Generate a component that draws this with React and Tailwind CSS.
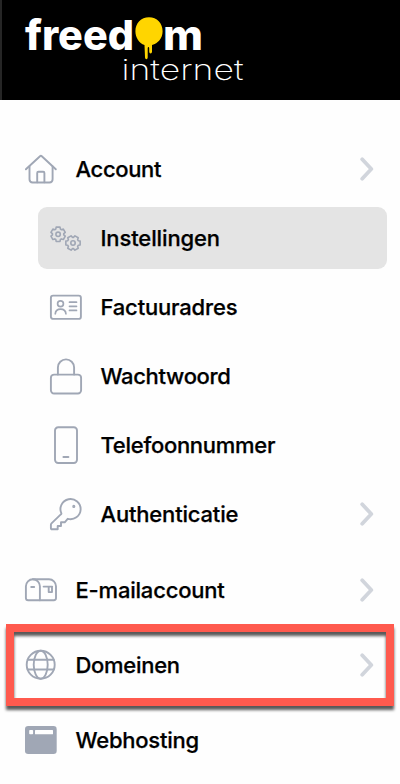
import clsx from 'clsx';

const Icon = ({ children }) => (
  <svg
    viewBox="0 0 32 32"
    className="h-8 w-8 shrink-0 overflow-visible text-[#a0a7b5]"
    fill="none"
    stroke="currentColor"
    strokeWidth="1.9"
    strokeLinecap="round"
    strokeLinejoin="round"
  >
    {children}
  </svg>
);

const HomeIcon = () => (
  <Icon>
    <path d="M.9 16.3 15 3.2q.9-.8 1.8 0L30.8 16.3" />
    <path d="M4.5 13.4v12.9q0 3.2 3.2 3.2h16.7q3.2 0 3.2-3.2V13.4" />
    <path d="M12.2 29.300V20q0-1.200 1.200-1.200h4.800q1.200 0 1.200 1.200v9.300" />
  </Icon>
);

// six-toothed cog outline around (cx, cy)
const cogPath = (cx, cy, turn) => {
  const points = [];
  for (let i = 0; i < 6; i++) {
    const mid = turn + i * 60;
    [[-24, 5.7], [-15, 7.4], [15, 7.4], [24, 5.7]].forEach(([offset, r]) => {
      const a = ((mid + offset) * Math.PI) / 180;
      points.push(`${(cx + r * Math.cos(a)).toFixed(2)} ${(cy + r * Math.sin(a)).toFixed(2)}`);
    });
  }
  return `M${points.join('L')}Z`;
};

const CogsIcon = () => (
  <Icon>
    <g strokeWidth="1.6">
      <path d={cogPath(8.1, 12.3, 30)} />
      <circle cx="8.1" cy="12.3" r="2.2" />
      <path d={cogPath(23, 21, 0)} />
      <circle cx="23" cy="21" r="2.2" />
    </g>
  </Icon>
);

const CardIcon = () => (
  <Icon>
    <rect x=".9" y="4.6" width="30" height="23.3" rx="2.2" />
    <g strokeWidth="1.7">
      <circle cx="10.5" cy="12.8" r="2.9" />
      <path d="M5.3 22.8c.4-6.3 10.2-6.3 10.600 0M19.500 11.200h7M19.500 15.300h7M19.500 19.400h7" />
    </g>
  </Icon>
);

const LockIcon = () => (
  <Icon>
    <rect x=".9" y="14.6" width="30.2" height="18.900" rx="3.200" />
    <path d="M7.900 14.500v-7a8.100 8.100 0 0 1 16.200 0v7" />
  </Icon>
);

const PhoneIcon = () => (
  <Icon>
    <rect x="5" y="-1.700" width="22" height="35.700" rx="3.200" />
    <path d="M13.400 28h5" />
  </Icon>
);

const KeyIcon = () => (
  <Icon>
    <path d="M11.400 15.400A10.100 10.100 0 1 1 17.700 20.800l-3 3.500H11V28H7.700v3.300H2Q.9 31.300.9 30.200v-3.400q0-.9.6-1.500l9.300-8.900q.6-.5.6-1Z" />
    <circle cx="23.800" cy="8.400" r=".6" fill="currentColor" />
  </Icon>
);

const MailboxIcon = () => (
  <Icon>
    <path d="M.9 12.300a7 7 0 0 1 14 0v14H3.100q-2.200 0-2.200-2.200Z" />
    <path d="M7.900 5.300H24a7 7 0 0 1 7 7v11.800q0 2.200-2.200 2.200h-14" />
    <path d="M6.200 13h3M18.600 12.600h8.600M27 12.600v5.500h-3.300v-5.500" />
  </Icon>
);

const GlobeIcon = () => (
  <Icon>
    <circle cx="15.700" cy="15.700" r="14" />
    <ellipse cx="15.700" cy="15.700" rx="7" ry="14" />
    <path d="M2.700 10.700h26M2.700 20.500h26" />
  </Icon>
);

const WindowIcon = () => (
  <Icon>
    <rect x="0" y="2" width="31.700" height="28" rx="3.200" fill="currentColor" stroke="none" />
    <rect x="4.200" y="6" width="3.900" height="4.200" rx=".8" fill="white" stroke="none" />
    <rect x="10" y="6" width="18" height="4.200" rx=".5" fill="white" stroke="none" />
  </Icon>
);

const Chevron = () => (
  <svg
    viewBox="0 0 14 24"
    className="ml-auto h-6 w-3.5 shrink-0 text-[#d1d5dc]"
    fill="none"
    stroke="currentColor"
    strokeWidth="3.800"
    strokeLinecap="round"
    strokeLinejoin="round"
  >
    <path d="M2.200 2.300 11.300 12 2.200 21.700" />
  </svg>
);

const Logo = () => (
  <svg
    viewBox="0 0 260 100"
    className="h-[100px] w-[260px]"
    fontFamily="Inter, sans-serif"
    role="img"
    aria-label="freedom internet"
  >
    <text fill="white">
      <tspan x="25" y="50" fontSize="41" fontWeight="800" textLength="109" lengthAdjust="spacingAndGlyphs">
        freed
      </tspan>
      <tspan x="163" y="50" fontSize="41" fontWeight="800" textLength="40" lengthAdjust="spacingAndGlyphs">
        m
      </tspan>
      <tspan x="121.500" y="79.500" fontSize="28" fontWeight="200" textLength="122" lengthAdjust="spacingAndGlyphs">
        internet
      </tspan>
    </text>
    <path
      fill="#ffd500"
      d="M149 17.200c8 0 13.600 6 13.600 14 0 7-4.600 12.200-10.600 13.800v6.500c0 2.600-2.800 2.600-2.800 0v-3.300c0-1.500-1.500-1.500-1.500 0v9c0 2.600-2.600 2.600-2.700 0L144.500 45c-5.600-2-9.100-7.500-9.100-13.800 0-8 5.600-14 13.600-14Z"
    />
  </svg>
);

const accountItems = [
  { label: 'Instellingen', icon: CogsIcon, active: true, tracking: 'tracking-[-0.12px]' },
  { label: 'Factuuradres', icon: CardIcon, tracking: 'tracking-[-0.18px]' },
  { label: 'Wachtwoord', icon: LockIcon, tracking: 'tracking-[-0.32px]' },
  { label: 'Telefoonnummer', icon: PhoneIcon, tracking: 'tracking-[-0.28px]' },
  { label: 'Authenticatie', icon: KeyIcon, expandable: true, tracking: 'tracking-[-0.18px]' },
];

const NavItem = ({ item, nested }) => {
  const ItemIcon = item.icon;
  return (
    <a
      className={clsx(
        'flex h-[62px] items-center gap-[18.5px] rounded-[9px] pr-[13px]',
        nested ? 'ml-[37.5px] pl-[12.5px]' : 'pl-[25px]',
        item.active && 'bg-[#e4e4e4]'
      )}
    >
      <ItemIcon />
      <span className={item.tracking}>{item.label}</span>
      {item.expandable && <Chevron />}
    </a>
  );
};

const App = () => {
  return (
    <div className="h-[784px] w-[400px] overflow-hidden bg-[#fefefe] font-['Inter',sans-serif] text-[22px] font-medium text-black [-webkit-text-stroke:0.25px]">
      <header className="h-[100px] border-l-2 border-[#262626] bg-black [-webkit-text-stroke:0]">
        <div className="-ml-0.5">
          <Logo />
        </div>
      </header>

      <nav className="pt-[38px] pr-[13px]">
        <NavItem item={{ label: 'Account', icon: HomeIcon, expandable: true, tracking: 'tracking-[-0.36px]' }} />
        <div className="mt-[7px] flex flex-col gap-[7px]">
          {accountItems.map((item) => (
            <NavItem key={item.label} item={item} nested />
          ))}
        </div>
        <div className="relative mt-[14px] flex flex-col gap-[13px]">
          <NavItem item={{ label: 'E-mailaccount', icon: MailboxIcon, expandable: true, tracking: 'tracking-[-0.2px]' }} />
          <NavItem item={{ label: 'Domeinen', icon: GlobeIcon, expandable: true, tracking: 'tracking-[-0.28px]' }} />
          <NavItem item={{ label: 'Webhosting', icon: WindowIcon, tracking: 'tracking-[-0.24px]' }} />

          {/* Highlight frame */}
          <div className="pointer-events-none absolute top-[65px] left-[6px] h-[82px] w-[388px] border-8 border-[#ff5a4e] drop-shadow-[0_4px_1.5px_rgba(0,0,0,0.65)]" />
        </div>
      </nav>
    </div>
  );
};

export default App;
